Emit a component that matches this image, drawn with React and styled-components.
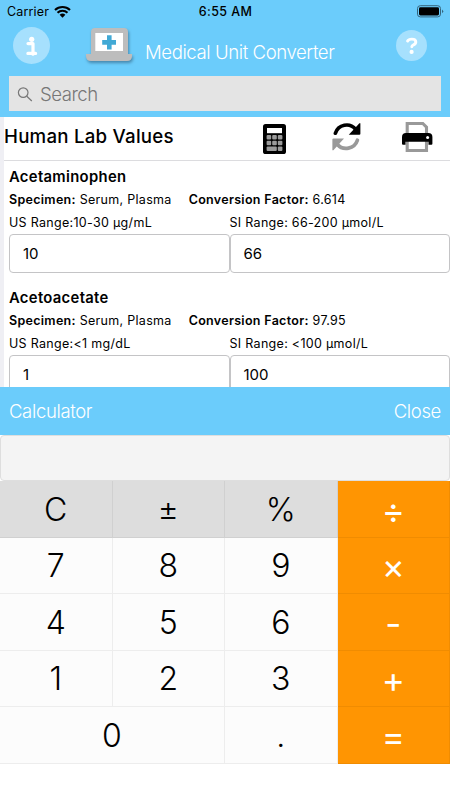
import React from 'react';
import styled, { createGlobalStyle } from 'styled-components';

const labs = [
  {
    name: 'Acetaminophen',
    specimen: 'Serum, Plasma',
    factor: '6.614',
    us: 'US Range:10-30 µg/mL',
    si: 'SI Range: 66-200 µmol/L',
    usValue: '10',
    siValue: '66',
  },
  {
    name: 'Acetoacetate',
    specimen: 'Serum, Plasma',
    factor: '97.95',
    us: 'US Range:<1 mg/dL',
    si: 'SI Range: <100 µmol/L',
    usValue: '1',
    siValue: '100',
  },
];

const keys = [
  { label: 'C', kind: 'function' },
  { label: '±', kind: 'function' },
  { label: '%', kind: 'function' },
  { label: '÷', kind: 'operator' },
  { label: '7' },
  { label: '8' },
  { label: '9' },
  { label: '×', kind: 'operator' },
  { label: '4' },
  { label: '5' },
  { label: '6' },
  { label: '-', kind: 'operator' },
  { label: '1' },
  { label: '2' },
  { label: '3' },
  { label: '+', kind: 'operator' },
  { label: '0', wide: true },
  { label: '.' },
  { label: '=', kind: 'operator' },
];

const keyColors = {
  function: '#dddddd',
  operator: '#ff9502',
};

const GlobalStyle = createGlobalStyle`
  * {
    box-sizing: border-box;
  }

  body {
    margin: 0;
    background: #fff;
    color: #000;
    font-family: Inter, 'Liberation Sans', sans-serif;
  }
`;

const Screen = styled.div`
  width: 450px;
  height: 800px;
  display: flex;
  flex-direction: column;
  overflow: hidden;
  background: #fff;
`;

const Header = styled.header`
  flex: none;
  height: 117px;
  background: #6bccfb;
`;

const StatusBar = styled.div`
  display: grid;
  grid-template-columns: 1fr auto 1fr;
  align-items: center;
  height: 23px;
  padding: 0 6px 0 7px;
  font-size: 12.5px;
`;

const Carrier = styled.div`
  display: flex;
  align-items: center;
  gap: 5px;
  letter-spacing: 0.15px;
`;

const Clock = styled.div`
  font-weight: 500;
  letter-spacing: 0.4px;
`;

const Battery = styled.svg`
  justify-self: end;
`;

const TitleBar = styled.div`
  display: flex;
  height: 53px;
  padding: 0 23px 0 13px;
`;

const RoundButton = styled.div`
  flex: none;
  width: ${(props) => props.$size}px;
  height: ${(props) => props.$size}px;
  margin-top: ${(props) => props.$top}px;
  border-radius: 50%;
  background: #a6e0fd;
`;

const Logo = styled.svg`
  flex: none;
  margin: 0 0 0 33px;
  filter: drop-shadow(1px 2px 1.5px rgba(40, 80, 110, 0.55));
`;

const AppTitle = styled.div`
  flex: 1;
  margin: 16px 0 0 12px;
  color: #fff;
  font-size: 18.6px;
  font-weight: 300;
  line-height: 26px;
  letter-spacing: -0.43px;
  white-space: nowrap;
`;

const SearchBox = styled.div`
  display: flex;
  align-items: center;
  gap: 7px;
  height: 35px;
  margin: 0 9px;
  padding-left: 8px;
  background: #e4e4e4;
  color: #777;
  font-size: 18.6px;
  font-weight: 300;
  letter-spacing: -0.5px;
`;

const Content = styled.main`
  flex: none;
  height: 270px;
  overflow: hidden;
  border-left: 4px solid #efeff4;
`;

const Toolbar = styled.div`
  display: flex;
  height: 44px;
  border-bottom: 1px solid #dcdcdf;
`;

const Heading = styled.h1`
  flex: none;
  width: 258px;
  margin: 0;
  font-size: 18.7px;
  font-weight: 500;
  line-height: 40px;
  letter-spacing: 0.23px;
`;

const ToolIcon = styled.svg`
  flex: none;
  margin: ${(props) => props.$top}px ${(props) => props.$gap}px 0 0;
`;

const LabCard = styled.section`
  height: 120.5px;
  padding: 6px 0 0 5px;
`;

const LabName = styled.h2`
  margin: 0;
  font-size: 14.8px;
  font-weight: 600;
  line-height: 20px;
  letter-spacing: 0.33px;
`;

const Details = styled.div`
  display: flex;
  gap: 17px;
  margin-top: 1px;
  font-size: 12.5px;
  line-height: 24px;
  letter-spacing: 0.3px;
  white-space: nowrap;

  b {
    font-weight: 600;
  }
`;

const Pair = styled.div`
  display: grid;
  grid-template-columns: 220.5px 220.5px;
`;

const Range = styled.div`
  font-size: 12.5px;
  line-height: 21px;
  letter-spacing: 0.3px;
  white-space: nowrap;
`;

const ValueField = styled.div`
  height: 39px;
  margin-top: 1px;
  padding-left: 13px;
  border: 1px solid #c4c4c6;
  border-radius: 4px;
  font-size: 15px;
  line-height: 37px;
`;

const CalculatorBar = styled.div`
  flex: none;
  display: flex;
  justify-content: space-between;
  height: 48px;
  padding: 0 9px;
  background: #6bccfb;
  color: #fff;
  font-size: 18.5px;
  font-weight: 300;
  line-height: 48px;
  letter-spacing: -0.35px;
`;

const Display = styled.div`
  flex: none;
  height: 46px;
  border: 1px solid #dedede;
  border-radius: 4px;
  background: #f4f4f4;
`;

const Keypad = styled.div`
  flex: none;
  display: grid;
  grid-template-columns: repeat(4, 112.5px);
  grid-template-rows: repeat(5, 56.6px);
`;

const Key = styled.div`
  grid-column: span ${(props) => (props.$wide ? 2 : 1)};
  display: flex;
  align-items: center;
  justify-content: center;
  padding-top: ${(props) => (props.$kind === 'function' ? 3 : 1.5)}px;
  border: solid rgba(0, 0, 0, 0.06);
  border-width: 0 1px 1px 0;
  background: ${(props) => keyColors[props.$kind] || '#fcfcfc'};
  color: ${(props) => (props.$kind === 'operator' ? '#fff' : '#000')};
  font-size: ${(props) => (props.$kind === 'operator' ? 35 : 32)}px;
  font-weight: ${(props) => (props.$kind === 'operator' ? 400 : 300)};
  line-height: 38px;
`;

function App() {
  return (
    <>
      <GlobalStyle />
      <Screen>
        <Header>
          <StatusBar>
            <Carrier>
              Carrier
              <svg width='17' height='12' viewBox='0 0 17 12'>
                <path d='M1 4.1A10.8 10.8 0 0 1 16 4.1M3.5 6.8a7.2 7.2 0 0 1 10 0' fill='none' stroke='#000' strokeWidth='2.1' />
                <path d='M5.6 8.8a4.2 4.2 0 0 1 5.8 0L8.5 11.8z' />
              </svg>
            </Carrier>
            <Clock>6:55 AM</Clock>
            <Battery width='27' height='13' viewBox='0 0 27 13'>
              <rect x='0.5' y='0.7' width='23' height='11.2' rx='2.8' fill='none' stroke='#35657d' />
              <rect x='2' y='2.2' width='20' height='8.2' rx='1.4' />
              <path d='M25 4.4q2.4 1.9 0 3.8z' fill='#35657d' />
            </Battery>
          </StatusBar>
          <TitleBar>
            <RoundButton $size={37} $top={4}>
              <svg width='37' height='37' viewBox='0 0 37 37' fill='#fff'>
                <circle cx='18.7' cy='12.3' r='2.6' />
                <path
                  d='M15 16.6h5v10.6M14.900 26.4h7.700'
                  fill='none'
                  stroke='#fff'
                  strokeWidth='3.2'
                  strokeLinecap='round'
                  strokeLinejoin='round'
                />
              </svg>
            </RoundButton>
            <Logo width='50' height='40' viewBox='0 0 50 40'>
              <path d='M8 31V9q0-4 4-4h29q4 0 4 4v22z' fill='#bdbdbd' />
              <path d='M12.3 10H40v18H12.3z' fill='#fff' />
              <path d='M24 12.3h4.6v4.7H33v4.8h-4.4v4.6H24v-4.6h-4.8V17H24z' fill='#41a9d5' />
              <path d='M3 31h46v2q0 5-5 5H8q-5 0-5-5z' fill='#bdbdbd' />
            </Logo>
            <AppTitle>Medical Unit Converter</AppTitle>
            <RoundButton $size={31} $top={7}>
              <svg width='31' height='31' viewBox='0 0 31 31'>
                <path
                  d='M11.6 11q1-1.900 4.200-1.900 4 0 4 2.900 0 1.900-2.300 2.900-1.700.8-1.700 1.900'
                  fill='none'
                  stroke='#fff'
                  strokeWidth='2.9'
                  strokeLinecap='round'
                />
                <circle cx='15.6' cy='21.9' r='2.1' fill='#fff' />
              </svg>
            </RoundButton>
          </TitleBar>
          <SearchBox>
            <svg width='16' height='16' viewBox='0 0 16 16' fill='none' stroke='#777' strokeWidth='1.2'>
              <circle cx='6.2' cy='6.6' r='4.8' />
              <path d='M9.8 10.2l5 4.8' />
            </svg>
            Search
          </SearchBox>
        </Header>

        <Content>
          <Toolbar>
            <Heading>Human Lab Values</Heading>
            <ToolIcon $top={6} $gap={45} width='25' height='32' viewBox='0 0 25 32'>
              <rect x='1' y='1' width='23' height='30' rx='2.6' />
              <path d='M5 5h15v5.2H5z' fill='#fff' />
              <g fill='#9b9b9b'>
                <rect x='4.6' y='12' width='4.6' height='4.4' rx='1' />
                <rect x='10.2' y='12' width='4.6' height='4.4' rx='1' />
                <rect x='15.8' y='12' width='4.6' height='4.4' rx='1' />
                <rect x='4.6' y='17.8' width='4.6' height='4.4' rx='1' />
                <rect x='10.2' y='17.8' width='4.6' height='4.4' rx='1' />
                <rect x='15.8' y='17.8' width='4.6' height='4.4' rx='1' />
                <rect x='4.6' y='23.6' width='10.2' height='4.4' rx='1' />
                <rect x='15.8' y='23.6' width='4.6' height='4.4' rx='1' />
              </g>
            </ToolIcon>
            <ToolIcon $top={5} $gap={39} width='30' height='30' viewBox='0 0 30 30'>
              <path d='M3.4 11.2A11.8 11.8 0 0 1 23.6 7.2' fill='none' stroke='#000' strokeWidth='3.7' strokeLinecap='round' />
              <path d='M28.4 1.2v10.6q0 1-1 1H16.8L27.4 1.2z' />
              <path d='M25.4 18.2A11.8 11.8 0 0 1 5.200 22.200' fill='none' stroke='#999' strokeWidth='3.7' strokeLinecap='round' />
              <path d='M.4 28.2V17.6q0-1 1-1H12L1.400 28.200z' fill='#999' />
            </ToolIcon>
            <ToolIcon $top={4} $gap={0} width='32' height='32' viewBox='0 0 32 32'>
              <path d='M6.2 14V2.5h15.6l3.7 3.700V14M6.2 20v9.500h19.300V20' fill='none' stroke='#999' strokeWidth='3.1' />
              <path d='M1 22.700V16q0-4 4-4h22.400q4 0 4 4v6.700q0 1-1 1H27.500v-3H4.500v3H2q-1 0-1-1z' />
              <circle cx='26.600' cy='16.600' r='1.5' fill='#fff' />
            </ToolIcon>
          </Toolbar>
          {labs.map((lab) => (
            <LabCard key={lab.name}>
              <LabName>{lab.name}</LabName>
              <Details>
                <span>
                  <b>Specimen:</b> {lab.specimen}
                </span>
                <span>
                  <b>Conversion Factor:</b> {lab.factor}
                </span>
              </Details>
              <Pair>
                <Range>{lab.us}</Range>
                <Range>{lab.si}</Range>
                <ValueField>{lab.usValue}</ValueField>
                <ValueField>{lab.siValue}</ValueField>
              </Pair>
            </LabCard>
          ))}
        </Content>

        <CalculatorBar>
          <span>Calculator</span>
          <span>Close</span>
        </CalculatorBar>
        <Display />
        <Keypad>
          {keys.map((key) => (
            <Key key={key.label} $kind={key.kind} $wide={key.wide}>
              {key.label}
            </Key>
          ))}
        </Keypad>
      </Screen>
    </>
  );
}

export default App;
